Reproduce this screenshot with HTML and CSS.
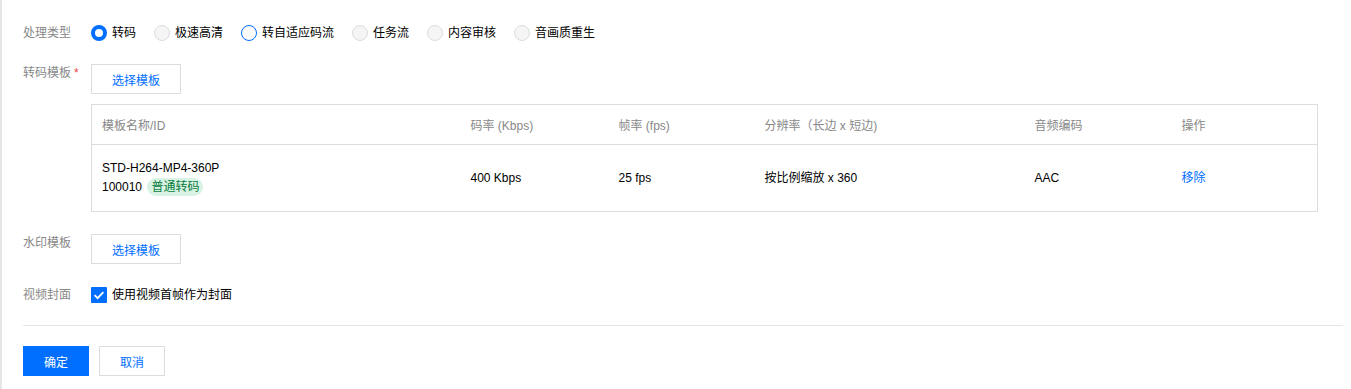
FILE: index.html
```html
<!doctype html>
<html lang="zh-CN">
<head>
    <meta charset="UTF-8">
    <title>处理类型</title>
    <link rel="stylesheet" href="styles.css">
</head>
<body>
<div class="page">
    <div class="form-item row-type">
        <div class="form-label">处理类型</div>
        <div class="radio-group">
            <label class="radio checked"><i></i>转码</label>
            <label class="radio disabled"><i></i>极速高清</label>
            <label class="radio hover"><i></i>转自适应码流</label>
            <label class="radio disabled"><i></i>任务流</label>
            <label class="radio disabled"><i></i>内容审核</label>
            <label class="radio disabled"><i></i>音画质重生</label>
        </div>
    </div>
    <div class="form-item row-tpl">
        <div class="form-label">转码模板<span class="req">*</span></div>
        <div class="form-control">
            <button class="btn">选择模板</button>
            <table class="tpl-table">
                <colgroup>
                    <col style="width:369px">
                    <col style="width:148px">
                    <col style="width:146px">
                    <col style="width:270px">
                    <col style="width:147px">
                    <col>
                </colgroup>
                <thead>
                <tr>
                    <th>模板名称/ID</th>
                    <th>码率 (Kbps)</th>
                    <th>帧率 (fps)</th>
                    <th>分辨率（长边 x 短边)</th>
                    <th>音频编码</th>
                    <th>操作</th>
                </tr>
                </thead>
                <tbody>
                <tr>
                    <td>
                        <div>STD-H264-MP4-360P</div>
                        <div>100010 <span class="tag">普通转码</span></div>
                    </td>
                    <td>400 Kbps</td>
                    <td>25 fps</td>
                    <td>按比例缩放 x 360</td>
                    <td>AAC</td>
                    <td><a class="link" href="#">移除</a></td>
                </tr>
                </tbody>
            </table>
        </div>
    </div>
    <div class="form-item row-mark">
        <div class="form-label">水印模板</div>
        <div class="form-control">
            <button class="btn">选择模板</button>
        </div>
    </div>
    <div class="form-item row-cover">
        <div class="form-label">视频封面</div>
        <label class="checkbox">
            <i><svg width="16" height="16" viewBox="0 0 16 16"><path d="M3.6 8.2l3 3 5.8-6" fill="none" stroke="#fff" stroke-width="1.8"/></svg></i>使用视频首帧作为封面
        </label>
    </div>
    <div class="divider"></div>
    <div class="footer">
        <button class="btn btn-primary">确定</button>
        <button class="btn btn-weak">取消</button>
    </div>
</div>
</body>
</html>
```
FILE: styles.css
```css
* {
    margin: 0;
    padding: 0;
    box-sizing: border-box;
}
body {
    font-family: "Liberation Sans", "Noto Sans CJK SC", sans-serif;
    font-size: 12px;
    color: #000;
    background: #fff;
}
.page {
    height: 389px;
    border-left: 2px solid #e6e6e6;
    padding: 24px 8px 0 21px;
}
.form-item {
    display: flex;
    align-items: flex-start;
}
.form-label {
    width: 68px;
    flex: none;
    line-height: 18px;
    color: #888;
}
.req {
    color: #e54545;
    margin-left: 3px;
}
.row-type {
    align-items: center;
    margin-bottom: 22px;
}
.row-tpl {
    margin-bottom: 22px;
}
.row-mark {
    margin-bottom: 22px;
}
.row-cover {
    align-items: center;
}

/* radio */
.radio-group {
    display: flex;
    align-items: center;
}
.radio {
    display: flex;
    align-items: center;
    margin-right: 18px;
    line-height: 18px;
    color: #000;
}
.radio i {
    width: 16px;
    height: 16px;
    border-radius: 50%;
    border: 1px solid #ddd;
    background: #fff;
    margin-right: 5px;
}
.radio.checked i {
    border: 4px solid #006eff;
}
.radio.disabled i {
    background: #f5f5f5;
}
.radio.hover i {
    border-color: #006eff;
}

/* button */
.btn {
    display: block;
    height: 30px;
    border: 1px solid #ddd;
    background: #fff;
    color: #006eff;
    font-family: inherit;
    font-size: 12px;
    width: 90px;
}
.btn-primary {
    width: 66px;
    background: #006eff;
    border-color: #006eff;
    color: #fff;
}
.btn-weak {
    width: 66px;
}

/* table */
.tpl-table {
    margin-top: 10px;
    width: 1227px;
    border-collapse: collapse;
    border: 1px solid #ddd;
    table-layout: fixed;
}
.tpl-table th {
    height: 40px;
    text-align: left;
    font-weight: normal;
    color: #888;
    padding: 0 10px;
    border-bottom: 1px solid #ddd;
}
.tpl-table td {
    height: 67px;
    padding: 0 10px;
    line-height: 19px;
}
.tag {
    display: inline-block;
    background: #d8f3e4;
    color: #0a7d40;
    border-radius: 9px;
    padding: 0 4px;
    line-height: 18px;
    margin-left: 2px;
}
.link {
    color: #006eff;
    text-decoration: none;
}

/* checkbox */
.checkbox {
    display: flex;
    align-items: center;
    line-height: 18px;
}
.checkbox i {
    width: 16px;
    height: 16px;
    background: #006eff;
    border-radius: 1px;
    margin-right: 5px;
    display: flex;
}

.divider {
    margin-top: 21px;
    border-top: 1px solid #e5e5e5;
}
.footer {
    display: flex;
    gap: 10px;
    margin-top: 20px;
}
```
